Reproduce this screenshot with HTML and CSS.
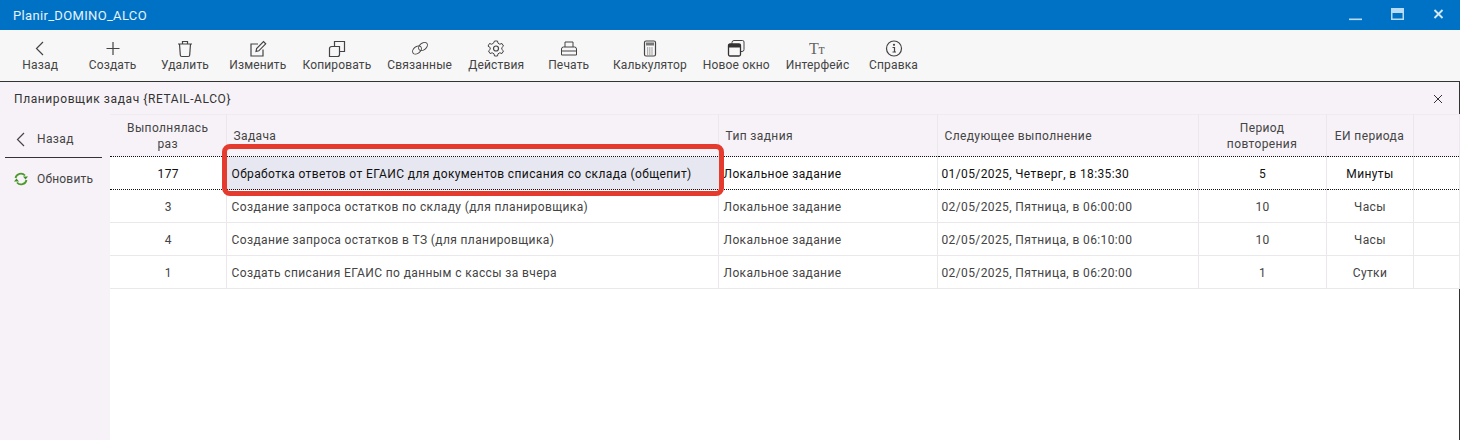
FILE: index.html
```html
<!DOCTYPE html>
<html lang="ru">
<head>
<meta charset="utf-8">
<title>Planir_DOMINO_ALCO</title>
<link rel="stylesheet" href="styles.css">
</head>
<body>
<header class="titlebar">
  <span class="app-name">Planir_DOMINO_ALCO</span>
  <div class="win-controls">
    <svg class="win-icon" viewBox="0 0 16 16"><rect x="2" y="11.500" width="13" height="1.600" fill="#b9dcf5"/></svg>
    <svg class="win-icon" viewBox="0 0 16 16"><rect x="2" y="1" width="13" height="12" fill="#b9dcf5"/><rect x="3.500" y="6" width="10" height="5.500" fill="#0072c6"/></svg>
    <svg class="win-icon" viewBox="0 0 16 16"><path d="M3.500 3l8 8M11.500 3l-8 8" stroke="#d5e9f8" stroke-width="1.800" fill="none"/></svg>
  </div>
</header>
<nav class="toolbar">
  <div class="tool"><svg viewBox="0 0 18 18"><path d="M12 2L5.500 8.500 12 15" class="ic"/></svg><span>Назад</span></div>
  <div class="tool"><svg viewBox="0 0 18 18"><path d="M9 2v13M2.500 8.500h13" class="ic"/></svg><span>Создать</span></div>
  <div class="tool"><svg viewBox="0 0 18 18"><path d="M2 4h14M6.500 4V1.500h5V4M3.500 4l.8 11a1.500 1.500 0 0 0 1.500 1.500h6.400a1.500 1.500 0 0 0 1.500-1.500L14.500 4" class="ic"/></svg><span>Удалить</span></div>
  <div class="tool"><svg viewBox="0 0 18 18"><path d="M14 9.500v6.500H2V4h7M7 11.500l.6-3L14.500 1.600l2.200 2.200L9.800 10.800z" class="ic"/></svg><span>Изменить</span></div>
  <div class="tool"><svg viewBox="0 0 18 18"><path d="M6.500 6.500V1.500h10v10h-5M1.500 8.500a2 2 0 0 1 2-2h8v8a2 2 0 0 1-2 2h-8z" class="ic"/></svg><span>Копировать</span></div>
  <div class="tool"><svg viewBox="0 0 18 18"><g class="ic thin"><ellipse cx="6" cy="10" rx="5" ry="3.300" transform="rotate(-40 6 10)"/><ellipse cx="12" cy="6.500" rx="5" ry="3.300" transform="rotate(-40 12 6.500)"/></g></svg><span>Связанные</span></div>
  <div class="tool"><svg viewBox="0 0 18 18"><path d="M7.500 1h3l.5 2.200 1.800 1 2.200-.7 1.500 2.600-1.700 1.500v1.800l1.700 1.500-1.500 2.600-2.200-.7-1.800 1-.5 2.200h-3l-.5-2.200-1.800-1-2.200.7-1.500-2.600 1.700-1.500V7.600L1 6.100l1.500-2.600 2.200.7 1.800-1z" class="ic thin"/><circle cx="9" cy="8.500" r="2.500" class="ic"/></svg><span>Действия</span></div>
  <div class="tool"><svg viewBox="0 0 18 18"><path d="M5 7V2h8v5M1.500 15V9a2 2 0 0 1 2-2h11a2 2 0 0 1 2 2v6zM1.500 11h15" class="ic thin"/></svg><span>Печать</span></div>
  <div class="tool"><svg viewBox="0 0 18 18"><rect x="3.500" y="1" width="11" height="15" rx="1.500" class="ic"/><rect x="5" y="2.500" width="8" height="3" fill="#777"/><path d="M6 8h6M6 10h6M6 12h6M6 14h6" stroke="#666" stroke-dasharray="1.200 1" fill="none"/></svg><span>Калькулятор</span></div>
  <div class="tool"><svg viewBox="0 0 18 18"><path d="M5 4V2.500a2 2 0 0 1 2-2h8.500A1.500 1.500 0 0 1 17 2v7.500a2 2 0 0 1-2 2h-1" class="ic thin"/><rect x="1.500" y="4" width="12" height="12" rx="1.500" fill="none" stroke="#333" stroke-width="1.300"/><rect x="1.500" y="4" width="12" height="3.500" fill="#333"/></svg><span>Новое окно</span></div>
  <div class="tool"><svg viewBox="0 0 18 18"><text x="0" y="14" class="tt-big">T</text><text x="9.500" y="14" class="tt-small">т</text></svg><span>Интерфейс</span></div>
  <div class="tool"><svg viewBox="0 0 18 18"><circle cx="9" cy="8.500" r="7.500" class="ic"/><path d="M7.500 7.500h2V12M7.500 12h3.500" class="ic"/><circle cx="9" cy="4.800" r="1.100" fill="#444"/></svg><span>Справка</span></div>
</nav>
<main class="window">
  <div class="window-title">
    <span>Планировщик задач {RETAIL-ALCO}</span>
    <svg class="close-x" viewBox="0 0 10 10"><path d="M1 1l8 8M9 1l-8 8" stroke="#333" stroke-width="1" fill="none"/></svg>
  </div>
  <div class="content">
    <aside class="side">
      <div class="side-item side-back"><svg viewBox="0 0 16 16"><path d="M11 2L4.500 8.500 11 15" class="ic"/></svg><span>Назад</span></div>
      <div class="side-item side-refresh"><svg viewBox="0 0 16 16"><path d="M2.500 7a5.500 5.500 0 0 1 9.500-2.500M13.500 9A5.500 5.500 0 0 1 4 11.500" fill="none" stroke="#4c9a2a" stroke-width="1.800"/><path d="M10 5.500h5l-2.500 3zM1 10.500h5l-2.500-3z" fill="#3f8f22"/></svg><span>Обновить</span></div>
    </aside>
    <div class="grid-wrap">
      <table class="grid">
        <colgroup>
          <col class="c1"><col class="c2"><col class="c3"><col class="c4"><col class="c5"><col class="c6"><col class="c7">
        </colgroup>
        <thead>
          <tr>
            <th class="ctr">Выполнялась<br>раз</th>
            <th class="pad-h">Задача</th>
            <th class="pad-h">Тип задния</th>
            <th class="pad-h">Следующее выполнение</th>
            <th class="ctr">Период<br>повторения</th>
            <th class="ctr">ЕИ периода</th>
            <th></th>
          </tr>
        </thead>
        <tbody>
          <tr class="current">
            <td class="ctr">177</td>
            <td class="selected">Обработка ответов от ЕГАИС для документов списания со склада (общепит)</td>
            <td>Локальное задание</td>
            <td class="date">01/05/2025, Четверг, в 18:35:30</td>
            <td class="ctr">5</td>
            <td class="ctr">Минуты</td>
            <td></td>
          </tr>
          <tr>
            <td class="ctr">3</td>
            <td>Создание запроса остатков по складу (для планировщика)</td>
            <td>Локальное задание</td>
            <td class="date">02/05/2025, Пятница, в 06:00:00</td>
            <td class="ctr">10</td>
            <td class="ctr">Часы</td>
            <td></td>
          </tr>
          <tr>
            <td class="ctr">4</td>
            <td>Создание запроса остатков в ТЗ (для планировщика)</td>
            <td>Локальное задание</td>
            <td class="date">02/05/2025, Пятница, в 06:10:00</td>
            <td class="ctr">10</td>
            <td class="ctr">Часы</td>
            <td></td>
          </tr>
          <tr>
            <td class="ctr">1</td>
            <td>Создать списания ЕГАИС по данным с кассы за вчера</td>
            <td>Локальное задание</td>
            <td class="date">02/05/2025, Пятница, в 06:20:00</td>
            <td class="ctr">1</td>
            <td class="ctr">Сутки</td>
            <td></td>
          </tr>
        </tbody>
      </table>
      <div class="highlight"></div>
    </div>
  </div>
</main>
</body>
</html>
```
FILE: styles.css
```css
* { box-sizing: border-box; }
html, body { margin: 0; height: 440px; overflow: hidden; }
body {
  font-family: Roboto, "Liberation Sans", sans-serif;
  font-size: 12px;
  letter-spacing: .38px;
  color: #333;
  background: #fff;
  display: flex;
  flex-direction: column;
}
.titlebar {
  height: 30px;
  flex: none;
  background: #0072c6;
  color: #e8f2fa;
  display: flex;
  align-items: center;
  justify-content: space-between;
  padding: 0 13px 0 13px;
}
.app-name { font-size: 13px; letter-spacing: .33px; }
.win-controls { display: flex; gap: 26px; }
.win-icon { width: 16px; height: 16px; display: block; }

.toolbar {
  height: 52px;
  flex: none;
  background: #f7f7f7;
  border-bottom: 1px solid #333;
  display: flex;
  padding-left: 4px;
}
.tool {
  min-width: 72.4px;
  padding: 10px 8px 0;
  display: flex;
  flex-direction: column;
  align-items: center;
  gap: 0;
  white-space: nowrap;
  color: #444;
  letter-spacing: .15px;
}
.tool svg { width: 18px; height: 18px; display: block; }
.ic { fill: none; stroke: #444; stroke-width: 1.2; }
.thin { stroke-width: 1; }
.tt-big { font-family: "Liberation Serif", serif; font-size: 16px; fill: #666; }
.tt-small { font-family: "Liberation Serif", serif; font-size: 14px; fill: #666; }

.window {
  flex: 1;
  min-height: 0;
  background: #f6f2f7;
  border-right: 1px solid #333;
  display: flex;
  flex-direction: column;
}
.window-title {
  height: 32px;
  flex: none;
  display: flex;
  align-items: center;
  justify-content: space-between;
  padding: 1px 16px 0 14px;
  color: #333;
  letter-spacing: .6px;
}
.close-x { width: 10px; height: 10px; display: block; }

.content { flex: 1; min-height: 0; display: flex; }
.side { width: 110px; flex: none; padding: 0 8px 0 5px; }
.side-item { display: flex; align-items: center; gap: 8px; color: #444; padding-left: 8px; }
.side-item svg { width: 16px; height: 16px; display: block; flex: none; }
.side-back { height: 44px; border-bottom: 1px solid #333; padding-top: 6px; }
.side-refresh { height: 42px; letter-spacing: .2px; }

.grid-wrap { flex: 1; min-width: 0; background: #fff; position: relative; }
.grid {
  border-collapse: collapse;
  table-layout: fixed;
  width: 1304px;
  line-height: 16px;
}
.c1 { width: 116px; }
.c2 { width: 492px; }
.c3 { width: 219px; }
.c4 { width: 261px; }
.c5 { width: 128px; }
.c6 { width: 87px; }
.c7 { width: 46px; }
.grid th {
  height: 42px;
  background: #f6f2f7;
  font-weight: 400;
  color: #444;
  text-align: left;
  padding: 0 6px 0 4px;
  border-top: 1px solid #efebf0;
  border-right: 1px solid #ebe8ec;
  border-bottom: 1px dotted #111;
}
.grid th.pad-h { padding-left: 7px; }
.grid th.ctr, .grid td.ctr { text-align: center; }
.grid td {
  height: 33px;
  padding: 2px 4px 0 5px;
  color: #444;
  white-space: nowrap;
  border-right: 1px solid #ebe8ec;
  border-bottom: 1px solid #ebe8ec;
}
.grid td.date { padding-left: 4px; }
.grid th.ctr { padding-left: 0; padding-right: 0; }
.grid tr.current td { color: #111; border-bottom: 1px dotted #111; }
.grid td.selected { background: #e6e7f0; }
.highlight {
  position: absolute;
  left: 112px;
  top: 30px;
  width: 502px;
  height: 52px;
  border: 5px solid #e53a2e;
  border-radius: 8px;
  pointer-events: none;
}
```
